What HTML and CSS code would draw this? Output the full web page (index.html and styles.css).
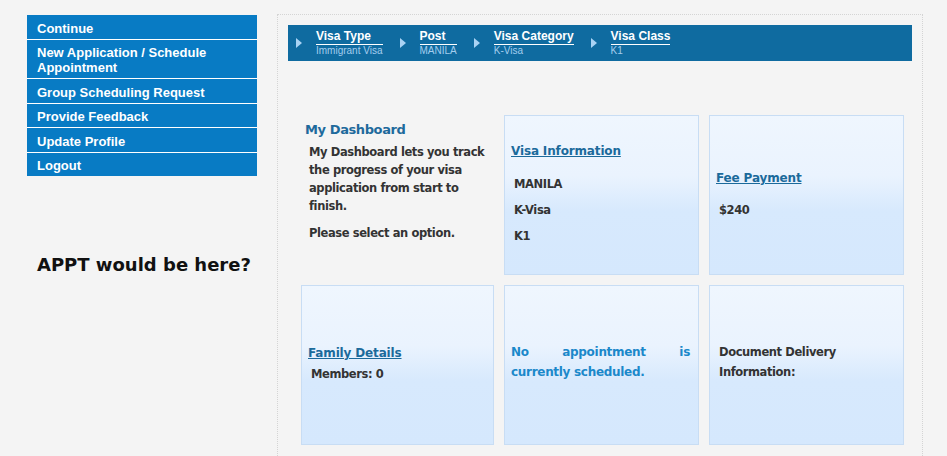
FILE: index.html
```html
<!DOCTYPE html>
<html lang="en">
<head>
    <meta charset="UTF-8">
    <meta name="viewport" content="width=device-width, initial-scale=1.0">
    <title>My Dashboard</title>
    <link rel="stylesheet" href="styles.css">
</head>
<body>

<div class="page">
    <div class="sidebar">
        <ul class="side-nav">
            <li><a href="#">Continue</a></li>
            <li><a href="#">New Application / Schedule Appointment</a></li>
            <li><a href="#">Group Scheduling Request</a></li>
            <li><a href="#">Provide Feedback</a></li>
            <li><a href="#">Update Profile</a></li>
            <li><a href="#">Logout</a></li>
        </ul>
        <p class="appt-note">APPT would be here?</p>
    </div>

    <div class="main-panel">
        <div class="crumbs">
            <div class="crumb">
                <span class="crumb-arrow"></span>
                <div class="crumb-text">
                    <div class="crumb-title">Visa Type</div>
                    <div class="crumb-value">Immigrant Visa</div>
                </div>
            </div>
            <div class="crumb">
                <span class="crumb-arrow"></span>
                <div class="crumb-text">
                    <div class="crumb-title">Post</div>
                    <div class="crumb-value">MANILA</div>
                </div>
            </div>
            <div class="crumb">
                <span class="crumb-arrow"></span>
                <div class="crumb-text">
                    <div class="crumb-title">Visa Category</div>
                    <div class="crumb-value">K-Visa</div>
                </div>
            </div>
            <div class="crumb">
                <span class="crumb-arrow"></span>
                <div class="crumb-text">
                    <div class="crumb-title">Visa Class</div>
                    <div class="crumb-value">K1</div>
                </div>
            </div>
        </div>

        <div class="dash-grid">
            <div class="dash-intro">
                <h2>My Dashboard</h2>
                <p>My Dashboard lets you track the progress of your visa application from start to finish.</p>
                <p class="select-hint">Please select an option.</p>
            </div>

            <div class="dash-card">
                <a href="#" class="card-link visa-link">Visa Information</a>
                <div class="card-item">MANILA</div>
                <div class="card-item">K-Visa</div>
                <div class="card-item">K1</div>
            </div>

            <div class="dash-card">
                <a href="#" class="card-link fee-link">Fee Payment</a>
                <div class="card-item">$240</div>
            </div>

            <div class="dash-card">
                <a href="#" class="card-link family-link">Family Details</a>
                <div class="card-item">Members: 0</div>
            </div>

            <div class="dash-card raised">
                <div class="appt-status">No appointment is currently scheduled.</div>
            </div>

            <div class="dash-card raised">
                <div class="delivery-info">Document Delivery Information:</div>
            </div>
        </div>
    </div>
</div>

</body>
</html>
```

FILE: styles.css
```css
body {
    margin: 0;
    background-color: #f4f4f4;
    font-family: "Liberation Sans", Arial, sans-serif;
    color: #333;
}
.page {
    display: flex;
    align-items: flex-start;
}
.sidebar {
    width: 230px;
    margin: 15px 0 0 27px;
}
.side-nav {
    list-style: none;
    margin: 0;
    padding: 0;
}
.side-nav li {
    background-color: #087bc4;
    border-bottom: 1px solid #fff;
}
.side-nav li:last-child {
    border-bottom: none;
}
.side-nav a {
    display: block;
    padding: 5.5px 10px 3px 10px;
    line-height: 15px;
    font-size: 13px;
    font-weight: bold;
    color: #fff;
    text-decoration: none;
}
.appt-note {
    margin: 78px 0 0 10px;
    font-family: "DejaVu Sans", sans-serif;
    font-size: 18px;
    font-weight: bold;
    color: #111;
}
.main-panel {
    width: 624px;
    height: 421px;
    margin: 14px 0 0 20px;
    padding: 10px;
    border: 1px dotted #d4d4d4;
    border-bottom: none;
}
.crumbs {
    display: flex;
    height: 36px;
    padding: 4px 0 0 8px;
    box-sizing: border-box;
    background-color: #0f6ba0;
}
.crumb {
    display: flex;
    align-items: flex-start;
    margin-right: 17px;
}
.crumb-arrow {
    width: 0;
    height: 0;
    margin: 9px 14px 0 0;
    border-left: 6px solid #a9d3f4;
    border-top: 5px solid transparent;
    border-bottom: 5px solid transparent;
}
.crumb-title {
    font-size: 12px;
    line-height: 14px;
    font-weight: bold;
    color: #fff;
    padding-bottom: 1px;
    border-bottom: 1px solid #fff;
}
.crumb-value {
    font-size: 10px;
    line-height: 12px;
    color: #a3cdee;
}
.dash-grid {
    display: grid;
    grid-template-columns: 193px 195px 195px;
    grid-template-rows: 160px 160px;
    gap: 10px;
    margin: 54px 0 0 13px;
    font-family: "DejaVu Sans", sans-serif;
    font-weight: bold;
    font-size: 11.5px;
    letter-spacing: -0.4px;
}
.dash-intro {
    padding: 6px 4px 0 4px;
}
.dash-intro h2 {
    margin: 0 0 4px 0;
    font-size: 13px;
    line-height: 18px;
    color: #1e6a9c;
}
.dash-intro p {
    margin: 0 0 0 4px;
    line-height: 18px;
}
.dash-intro .select-hint {
    margin-top: 9px;
}
.dash-card {
    display: flex;
    flex-direction: column;
    justify-content: center;
    padding: 0 8px 3px 6px;
    border: 1px solid #c8ddf4;
    background: linear-gradient(to bottom, #eff6fe 0%, #eaf3fe 38%, #d7e9fd 60%, #d5e8fd 100%);
}
.dash-card.raised {
    padding-bottom: 7px;
}
.card-link {
    font-size: 12px;
    line-height: 18px;
    letter-spacing: -0.15px;
    color: #1b6a9b;
    text-decoration: underline;
}
.visa-link {
    margin-bottom: 15px;
}
.fee-link {
    margin-bottom: 14px;
}
.family-link {
    margin-bottom: 3px;
}
.card-item {
    padding-left: 3px;
    line-height: 18px;
    margin-bottom: 8px;
}
.card-item:last-child {
    margin-bottom: 0;
}
.appt-status {
    font-size: 12px;
    letter-spacing: -0.3px;
    line-height: 20px;
    color: #1b88ca;
    text-align: justify;
}
.delivery-info {
    padding-left: 3px;
    line-height: 20px;
}
```
